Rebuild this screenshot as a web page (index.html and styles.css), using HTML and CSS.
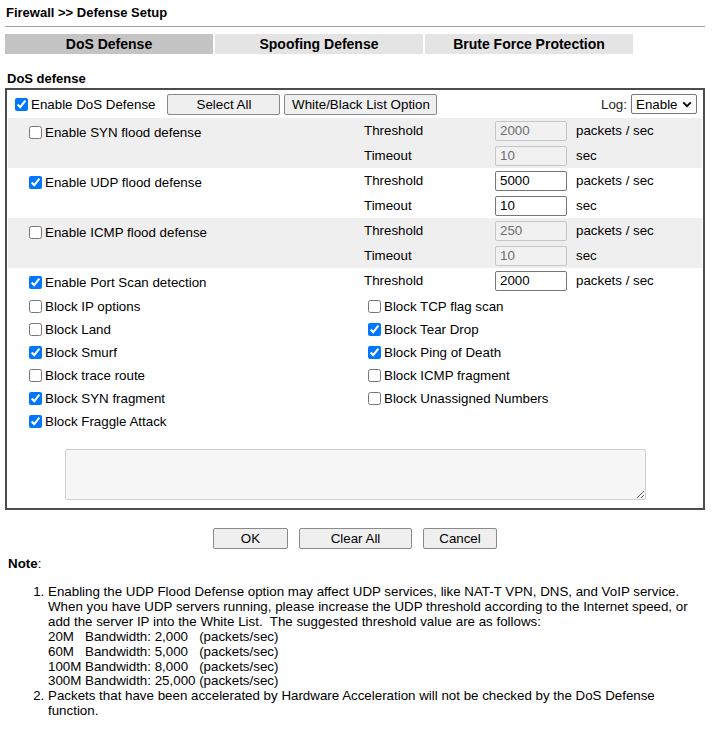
FILE: index.html
```html
<!DOCTYPE html>
<html lang="en">
<head>
<meta charset="utf-8">
<title>Firewall &gt;&gt; Defense Setup</title>
<link rel="stylesheet" href="styles.css">
</head>
<body>
<div class="page">
  <h1 class="title">Firewall &gt;&gt; Defense Setup</h1>
  <div class="rule"></div>

  <nav class="tabs">
    <a class="tab tab-active">DoS Defense</a>
    <a class="tab">Spoofing Defense</a>
    <a class="tab">Brute Force Protection</a>
  </nav>

  <h2 class="section-title">DoS defense</h2>

  <div class="panel">
    <div class="toolbar">
      <label class="check"><input type="checkbox" checked>Enable DoS Defense</label>
      <button class="btn btn-select">Select All</button>
      <button class="btn btn-list">White/Black List Option</button>
      <span class="log">Log:
        <span class="select-wrap">
          <select class="log-select"><option>Enable</option><option>Disable</option></select>
          <svg class="chevron" width="10" height="7" viewBox="0 0 10 7" aria-hidden="true"><path d="M1.2 1.4 L5 5.2 L8.8 1.4" fill="none" stroke="#000" stroke-width="1.8"/></svg>
        </span>
      </span>
    </div>

    <div class="flood shade">
      <label class="check flood-label"><input type="checkbox">Enable SYN flood defense</label>
      <span class="param-name">Threshold</span>
      <input class="num" type="text" value="2000" disabled>
      <span class="unit">packets / sec</span>
      <span class="param-name">Timeout</span>
      <input class="num" type="text" value="10" disabled>
      <span class="unit">sec</span>
    </div>

    <div class="flood">
      <label class="check flood-label"><input type="checkbox" checked>Enable UDP flood defense</label>
      <span class="param-name">Threshold</span>
      <input class="num" type="text" value="5000">
      <span class="unit">packets / sec</span>
      <span class="param-name">Timeout</span>
      <input class="num" type="text" value="10">
      <span class="unit">sec</span>
    </div>

    <div class="flood shade">
      <label class="check flood-label"><input type="checkbox">Enable ICMP flood defense</label>
      <span class="param-name">Threshold</span>
      <input class="num" type="text" value="250" disabled>
      <span class="unit">packets / sec</span>
      <span class="param-name">Timeout</span>
      <input class="num" type="text" value="10" disabled>
      <span class="unit">sec</span>
    </div>

    <div class="flood flood-single">
      <label class="check flood-label"><input type="checkbox" checked>Enable Port Scan detection</label>
      <span class="param-name">Threshold</span>
      <input class="num" type="text" value="2000">
      <span class="unit">packets / sec</span>
    </div>

    <div class="blocks">
      <label class="check"><input type="checkbox">Block IP options</label>
      <label class="check"><input type="checkbox">Block TCP flag scan</label>
      <label class="check"><input type="checkbox">Block Land</label>
      <label class="check"><input type="checkbox" checked>Block Tear Drop</label>
      <label class="check"><input type="checkbox" checked>Block Smurf</label>
      <label class="check"><input type="checkbox" checked>Block Ping of Death</label>
      <label class="check"><input type="checkbox">Block trace route</label>
      <label class="check"><input type="checkbox">Block ICMP fragment</label>
      <label class="check"><input type="checkbox" checked>Block SYN fragment</label>
      <label class="check"><input type="checkbox">Block Unassigned Numbers</label>
      <label class="check"><input type="checkbox" checked>Block Fraggle Attack</label>
    </div>

    <div class="memo-row">
      <textarea class="memo" readonly></textarea>
    </div>
  </div>

  <div class="actions">
    <button class="btn btn-ok">OK</button>
    <button class="btn btn-clear">Clear All</button>
    <button class="btn btn-cancel">Cancel</button>
  </div>

  <p class="note-head"><b>Note</b>:</p>
  <ol class="notes">
    <li>Enabling the UDP Flood Defense option may affect UDP services, like NAT-T VPN, DNS, and VoIP service. When you have UDP servers running, please increase the UDP threshold according to the Internet speed, or add the server IP into the White List.&nbsp; The suggested threshold value are as follows:<br>
      20M&nbsp;&nbsp; Bandwidth: 2,000&nbsp;&nbsp; (packets/sec)<br>
      60M&nbsp;&nbsp; Bandwidth: 5,000&nbsp;&nbsp; (packets/sec)<br>
      100M Bandwidth: 8,000&nbsp;&nbsp; (packets/sec)<br>
      300M Bandwidth: 25,000 (packets/sec)</li>
    <li>Packets that have been accelerated by Hardware Acceleration will not be checked by the DoS Defense function.</li>
  </ol>
</div>
</body>
</html>
```

FILE: styles.css
```css
* {
  box-sizing: border-box;
}

body {
  margin: 0;
  background: #fff;
  color: #000;
  font-family: "Liberation Sans", Arial, sans-serif;
  font-size: 13.333px;
}

.page {
  width: 700px;
  margin-left: 5px;
}

/* heading + divider */
.title {
  margin: 0;
  padding: 5px 0 0 1px;
  font-size: 13px;
  line-height: 16px;
  font-weight: bold;
}

.rule {
  height: 1px;
  margin-top: 5px;
  background: #a0a0a0;
}

/* tab strip */
.tabs {
  display: flex;
  gap: 2px;
  margin-top: 7px;
}

.tab {
  width: 208px;
  height: 20px;
  line-height: 20px;
  text-align: center;
  font-size: 14px;
  font-weight: bold;
  background: #e4e4e4;
}

.tab-active {
  background: #c4c4c4;
}

.section-title {
  margin: 17px 0 2px 2px;
  font-size: 13px;
  line-height: 15px;
  font-weight: bold;
}

/* main bordered panel */
.panel {
  border: 2px solid #4c4c4c;
  padding: 0 1px 8px;
}

.check {
  display: flex;
  align-items: center;
  white-space: nowrap;
}

.check input {
  width: 13px;
  height: 13px;
  margin: 0 3px 0 0;
}

.toolbar {
  display: flex;
  align-items: center;
  height: 28px;
  padding: 0 5px 0 7px;
}

.toolbar .check {
  margin-right: 12px;
}

.btn {
  font-family: "Liberation Sans", Arial, sans-serif;
  font-size: 13.333px;
  color: #000;
  height: 21px;
  padding: 0;
  background: #efefef;
  border: 1px solid #8a8a8a;
  border-radius: 2px;
}

.btn-select {
  width: 113px;
}

.btn-list {
  width: 153px;
  margin-left: 4px;
}

.log {
  margin-left: auto;
  display: flex;
  align-items: center;
  gap: 4px;
  color: #222;
}

.select-wrap {
  position: relative;
  display: block;
  width: 66px;
  height: 20px;
}

.log-select {
  appearance: none;
  -webkit-appearance: none;
  display: block;
  width: 66px;
  height: 20px;
  font-family: "Liberation Sans", Arial, sans-serif;
  font-size: 13.333px;
  color: #000;
  background: #fff;
  border: 1px solid #767676;
  border-radius: 2px;
  padding: 0 0 0 4px;
}

.chevron {
  position: absolute;
  right: 5px;
  top: 7px;
  pointer-events: none;
}

/* threshold sections */
.flood {
  display: grid;
  grid-template-columns: 356px 131px 72px auto;
  grid-auto-rows: 25px;
  align-items: center;
}

.flood.shade {
  background: #efefef;
}

.flood-label {
  grid-row: 1 / span 2;
  align-self: start;
  height: 25px;
  padding-left: 21px;
  padding-top: 3px;
}

.flood-single .flood-label {
  grid-row: 1;
}

.param-name {
  grid-column: 2;
}

.unit {
  padding-left: 9px;
}

.num {
  grid-column: 3;
  width: 72px;
  height: 20px;
  padding: 0 4px;
  font-family: "Liberation Sans", Arial, sans-serif;
  font-size: 13.333px;
  color: #000;
  background: #fff;
  border: 1px solid #767676;
  border-radius: 2px;
}

.num:disabled {
  color: #6d6d6d;
  background: #f1f1f1;
  border-color: #c6c6c6;
}

/* block options */
.blocks {
  display: grid;
  grid-template-columns: 360px auto;
  grid-auto-rows: 23px;
  align-items: center;
  padding-top: 2px;
}

.blocks .check:nth-child(odd) {
  padding-left: 21px;
}

.memo-row {
  padding: 16px 0 0 57px;
}

.memo {
  display: block;
  width: 581px;
  height: 51px;
  background: #f7f7f7;
  border: 1px solid #cfcfcf;
  border-radius: 2px;
  resize: both;
}

/* bottom buttons */
.actions {
  display: flex;
  justify-content: center;
  gap: 11px;
  margin-top: 18px;
}

.btn-ok {
  width: 75px;
}

.btn-clear {
  width: 113px;
}

.btn-cancel {
  width: 74px;
}

.note-head {
  margin: 7px 0 0 3px;
  line-height: 15px;
}

.notes {
  margin: 14px 0 0;
  padding-left: 43px;
  line-height: 14.9px;
}
```
